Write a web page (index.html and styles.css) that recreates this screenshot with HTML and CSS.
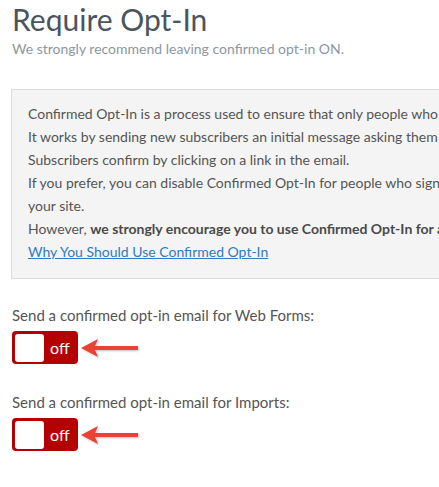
FILE: index.html
```html
<!DOCTYPE html>
<html lang="en">
<head>
    <meta charset="UTF-8">
    <meta name="viewport" content="width=device-width, initial-scale=1.0">
    <title>Require Opt-In</title>
    <link rel="stylesheet" href="styles.css">
</head>
<body>

    <div class="page">
        <h1>Require Opt-In</h1>
        <p class="subtitle">We strongly recommend leaving confirmed opt-in ON.</p>

        <div class="info">
            Confirmed Opt-In is a process used to ensure that only people who want your emails are added to your list.<br>
            It works by sending new subscribers an initial message asking them to confirm their subscription.<br>
            Subscribers confirm by clicking on a link in the email.<br>
            If you prefer, you can disable Confirmed Opt-In for people who sign up through forms on<br>
            your site.<br>
            However, <strong>we strongly encourage you to use Confirmed Opt-In for all subscribers.</strong><br>
            <a href="#" class="link">Why You Should Use Confirmed Opt-In</a>
        </div>

        <div class="setting">
            <label class="label">Send a confirmed opt-in email for Web Forms:</label>
            <div class="row">
                <span class="toggle"><span class="knob"></span>off</span>
                <svg class="arrow" width="60" height="24" viewBox="0 0 60 24">
                    <path d="M1 12 L18 3 L15 10 L58 10 L58 14 L15 14 L18 21 Z" fill="#ea4335"/>
                </svg>
            </div>
        </div>

        <div class="setting">
            <label class="label">Send a confirmed opt-in email for Imports:</label>
            <div class="row">
                <span class="toggle"><span class="knob"></span>off</span>
                <svg class="arrow" width="60" height="24" viewBox="0 0 60 24">
                    <path d="M1 12 L18 3 L15 10 L58 10 L58 14 L15 14 L18 21 Z" fill="#ea4335"/>
                </svg>
            </div>
        </div>
    </div>

</body>
</html>
```

FILE: styles.css
```css
html, body {
    overflow: hidden;
}
body {
    font-family: 'Lato', sans-serif;
    color: #555;
    background-color: #fff;
    margin: 0;
}
.page {
    padding: 0 12px;
    width: 700px;
}
h1 {
    font-size: 30px;
    font-weight: 400;
    color: #4b555d;
    margin: 2px 0 0;
    line-height: 34px;
}
.subtitle {
    font-size: 14px;
    color: #8c979f;
    margin: 3px 0 0;
    line-height: 20px;
}
.info {
    margin: 30px 0 0 -1px;
    background-color: #f4f4f4; /* light gray panel */
    border: 1px solid #dcdcdc;
    padding: 12px 16px 15px;
    font-size: 14px;
    line-height: 23px;
    white-space: nowrap;
}
.info strong {
    color: #4a4a4a;
}
.link {
    color: #2f7bbf;
    text-decoration: underline;
}
.setting {
    margin-top: 25px;
}
.setting + .setting {
    margin-top: 27px;
}
.label {
    display: block;
    font-size: 15px;
    line-height: 23px;
}
.row {
    display: flex;
    align-items: center;
    margin-top: 4px;
}
.toggle {
    display: flex;
    align-items: center;
    width: 66px;
    height: 33px;
    box-sizing: border-box;
    padding: 3px;
    background-color: #b50000; /* dark red "off" state */
    border-radius: 4px;
    color: #fff;
    font-size: 16px;
}
.knob {
    width: 29px;
    height: 28px;
    background-color: #fff;
    border-radius: 3px;
    margin-right: 6px;
}
.arrow {
    margin-left: 2px;
    filter: drop-shadow(1px 1px 1px rgba(0, 0, 0, 0.25));
}
```
